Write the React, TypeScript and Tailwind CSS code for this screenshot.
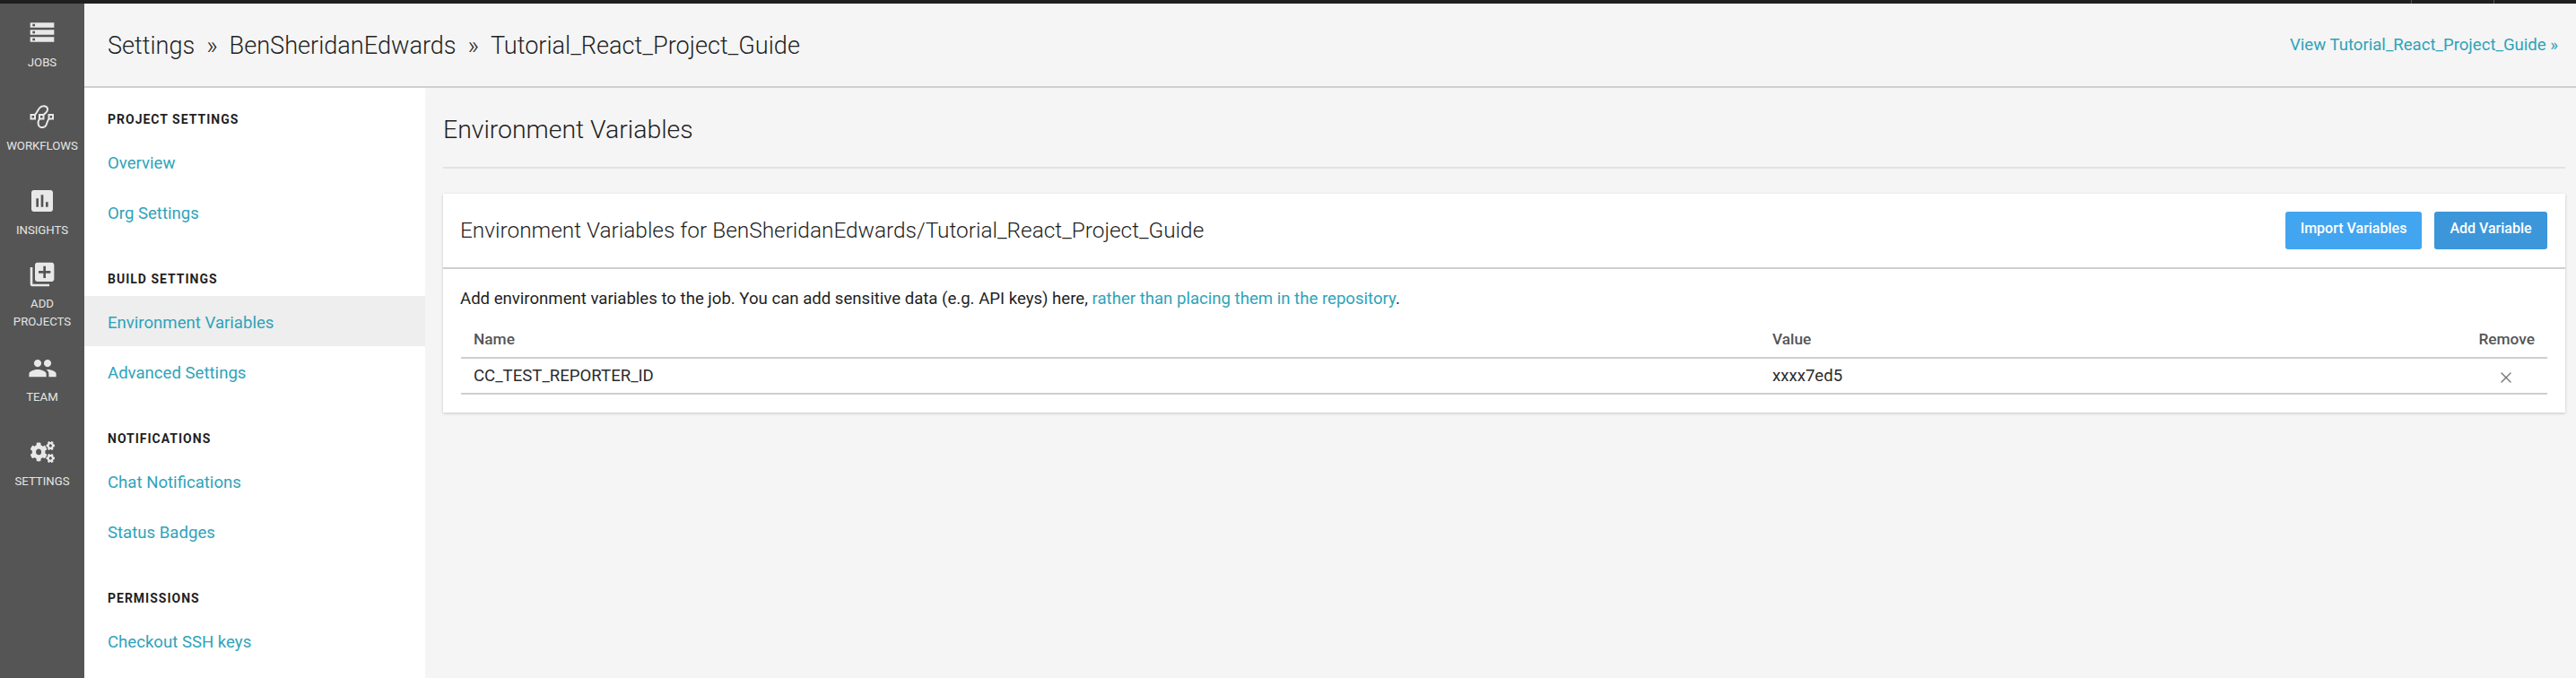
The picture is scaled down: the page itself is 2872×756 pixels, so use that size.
import React from "react";
import { MdStorage, MdInsertChart, MdLibraryAdd, MdPeople } from "react-icons/md";
import { FaCogs } from "react-icons/fa";
import { X } from "lucide-react";

const WorkflowsIcon = () => (
  <svg width="28" height="26" viewBox="0 0 28 26" fill="none" stroke="currentColor" strokeWidth="2">
    <rect x="1.500" y="11" width="4.500" height="4.500" />
    <rect x="11" y="11" width="4.500" height="4.500" />
    <rect x="21.500" y="11" width="4.500" height="4.500" />
    <path d="M6 11 C8 9 9 6 11 3.500 C13 0.500 19 0.500 20 4 C20.800 7 18 9 15.500 11" />
    <path d="M11 15.500 C9.500 18 9 21 10.500 23.500 C12.500 26 17 25.500 18.500 22.500 C19.500 20 20 17.500 21.500 15.500" />
  </svg>
);

const navItems = [
  { label: ["JOBS"], icon: <MdStorage size={32} />, cls: "pt-[16px]", gap: "mt-[8px]" },
  { label: ["WORKFLOWS"], icon: <WorkflowsIcon />, cls: "pt-[37px]", gap: "mt-[10px]" },
  { label: ["INSIGHTS"], icon: <MdInsertChart size={32} />, cls: "pt-[35px]", gap: "mt-[7px]" },
  { label: ["ADD", "PROJECTS"], icon: <MdLibraryAdd size={32} />, cls: "pt-[23px]", gap: "mt-[7px]" },
  { label: ["TEAM"], icon: <MdPeople size={33} />, cls: "pt-[25px]", gap: "mt-[6px]" },
  {
    label: ["SETTINGS"],
    icon: <FaCogs preserveAspectRatio="none" className="h-[24px] w-[27px]" />,
    cls: "pt-[39px]",
    gap: "mt-[11px]",
  },
];

const sections = [
  { title: "PROJECT SETTINGS", links: ["Overview", "Org Settings"] },
  { title: "BUILD SETTINGS", links: ["Environment Variables", "Advanced Settings"] },
  { title: "NOTIFICATIONS", links: ["Chat Notifications", "Status Badges"] },
  { title: "PERMISSIONS", links: ["Checkout SSH keys"] },
];

export default function App() {
  return (
    <div className="flex h-[756px] w-[2872px] flex-col overflow-hidden bg-[#f5f5f5] font-['Roboto',sans-serif] text-[#2b2b2b]">
      <div className="flex h-1 shrink-0 justify-end bg-[#1f1f1f]">
        <div className="mr-[91px] w-[93px] border-x border-[#555555]" />
      </div>
      <div className="flex min-h-0 flex-1">
        <aside className="flex w-[94px] shrink-0 flex-col bg-[#555555] text-[#e8e8e8]">
          {navItems.map((item) => (
            <div key={item.label.join(" ")} className={`flex flex-col items-center ${item.cls}`}>
              {item.icon}
              <div className={`text-center text-[13.200px] leading-[20px] text-[#e5e5e5] ${item.gap}`}>
                {item.label.map((line) => (
                  <div key={line}>{line}</div>
                ))}
              </div>
            </div>
          ))}
        </aside>

        <div className="flex min-w-0 flex-1 flex-col">
          <header className="flex h-[94px] shrink-0 items-center justify-between border-b-2 border-[#cfcfcf] pt-[2px] pr-[20px] pl-[26px]">
            <div className="text-[27.100px] font-[350] text-[#1f1f1f]">
              Settings<span className="mx-[13px]">»</span>BenSheridanEdwards<span className="mx-[13px]">»</span>Tutorial_React_Project_Guide
            </div>
            <a className="text-[18.600px] text-[#2fa3ba]">View Tutorial_React_Project_Guide »</a>
          </header>

          <div className="flex min-h-0 flex-1">
            <nav className="w-[380px] shrink-0 bg-white pt-[26px]">
              {sections.map((section) => (
                <div key={section.title} className="mb-[38px]">
                  <div className="flex h-[18px] items-center pl-[26px] text-[14px] font-bold tracking-[1px] text-[#1f1f1f]">
                    {section.title}
                  </div>
                  <div className="mt-[10px]">
                    {section.links.map((link) => (
                      <div
                        key={link}
                        className={`flex h-[56px] items-center pt-[5px] pl-[26px] text-[18.600px] text-[#2fa3ba] ${
                          link === "Environment Variables" ? "bg-[#eeeeee]" : ""
                        }`}
                      >
                        {link}
                      </div>
                    ))}
                  </div>
                </div>
              ))}
            </nav>

            <main className="min-w-0 flex-1 pr-[12px] pl-[20px]">
              <div className="mt-[30px] flex h-[60px] items-start border-b-2 border-[#e3e3e3] text-[28.400px] leading-[34px] font-[350] text-[#1f1f1f]">
                Environment Variables
              </div>
              <section className="mt-[28px] bg-white shadow-[0_1px_3px_rgba(0,0,0,0.2)]">
                <div className="flex h-[84px] items-center justify-between border-b-2 border-[#cfcfcf] pr-[20px] pl-[19px]">
                  <h2 className="text-[24.400px] font-[350] text-[#1f1f1f]">
                    Environment Variables for BenSheridanEdwards/Tutorial_React_Project_Guide
                  </h2>
                  <div className="flex gap-[14px]">
                    <button className="h-[42px] w-[152px] rounded-[3px] bg-[#42a5f0] pb-[4px] text-[16px] font-medium text-white">
                      Import Variables
                    </button>
                    <button className="h-[42px] w-[126px] rounded-[3px] bg-[#3c96da] pb-[4px] text-[16px] font-medium text-white">
                      Add Variable
                    </button>
                  </div>
                </div>
                <div className="px-[20px] pt-[19px] pb-[20px]">
                  <p className="-ml-px text-[18.600px] leading-[28px] text-[#1f1f1f]">
                    Add environment variables to the job. You can add sensitive data (e.g. API keys) here,{" "}
                    <a className="text-[#2fa3ba]">rather than placing them in the repository</a>.
                  </p>
                  <div className="mt-[15px] flex h-[38px] items-center justify-between border-b-2 border-[#cfcfcf] px-[14px] pb-[3px] text-[17.300px] font-medium text-[#555555]">
                    <span className="w-[1448px]">Name</span>
                    <span className="flex-1">Value</span>
                    <span>Remove</span>
                  </div>
                  <div className="flex h-[40px] items-center border-b-2 border-[#cfcfcf] px-[14px] pt-[2px] text-[18.600px] text-[#2b2b2b]">
                    <span className="w-[1448px]">CC_TEST_REPORTER_ID</span>
                    <span className="flex-1">xxxx7ed5</span>
                    <X size={20} strokeWidth={1.6} className="mr-[22px] -mb-[1px] text-[#777777]" />
                  </div>
                </div>
              </section>
            </main>
          </div>
        </div>
      </div>
    </div>
  );
}
